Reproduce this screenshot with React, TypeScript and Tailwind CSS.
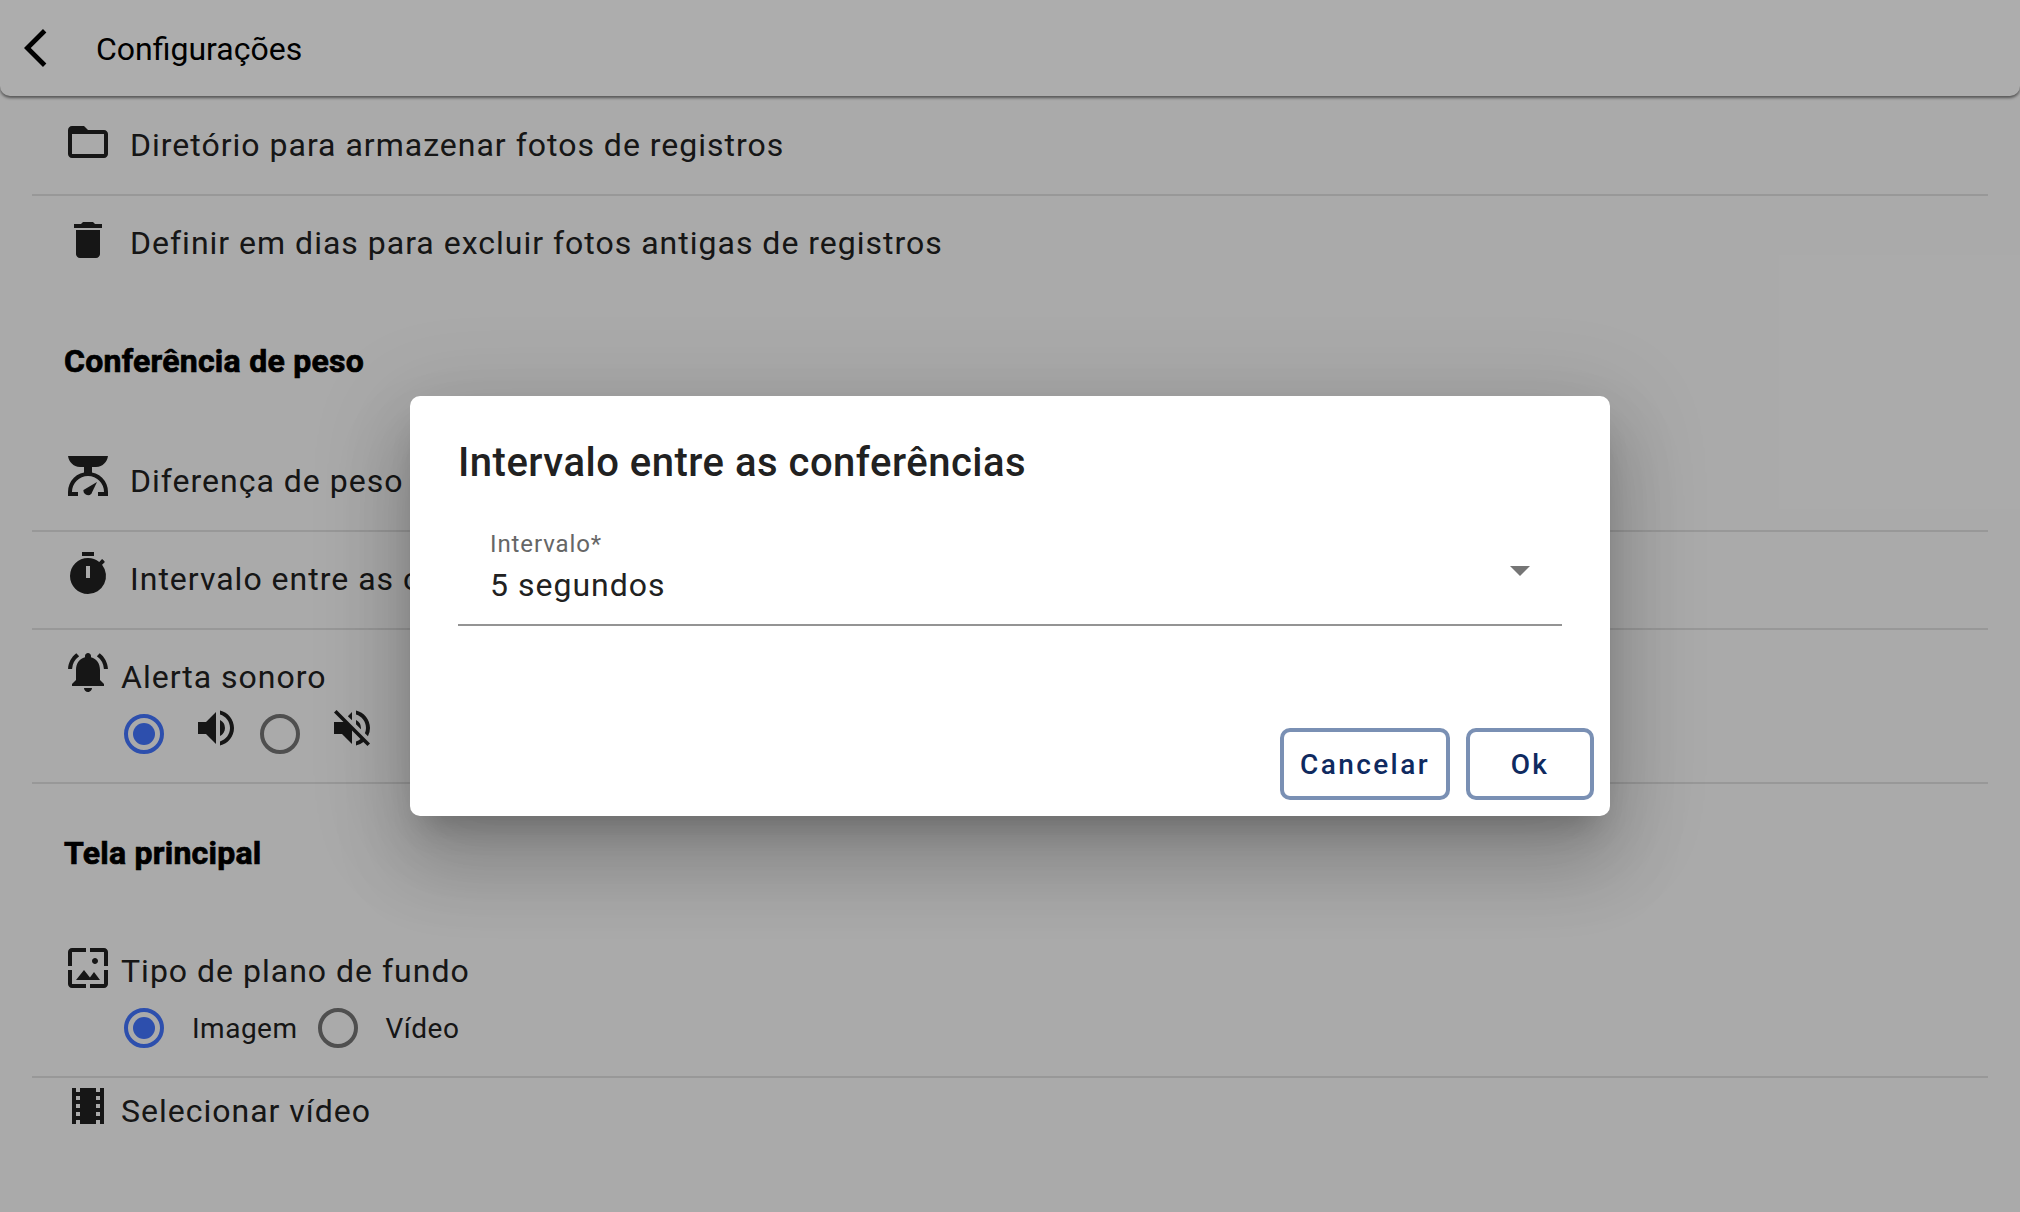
import React from "react";
import {
  MdArrowBackIos,
  MdFolderOpen,
  MdDelete,
  MdTimer,
  MdNotificationsActive,
  MdVolumeUp,
  MdVolumeOff,
  MdWallpaper,
  MdLocalMovies,
} from "react-icons/md";

function ScaleIcon() {
  return (
    <svg viewBox="0 0 40 40" className="h-10 w-10 shrink-0 text-[#212121]" fill="currentColor">
      <path d="M0 0H40C39 6 35 10.500 28 11H12C5 10.500 1 6 0 0Z" />
      <path d="M16 10H24V17H16Z" />
      <path d="M0 40V36A20 20 0 0 1 40 36V40H30V36H36A16 16 0 0 0 4 36H10V40Z" />
      <path d="M29 26 23.500 37.500A4.500 4.500 0 0 1 15.500 34Z" />
    </svg>
  );
}

function Radio({ on }: { on?: boolean }) {
  return (
    <span
      className={
        "flex h-10 w-10 shrink-0 items-center justify-center rounded-full border-4 " +
        (on ? "border-[#4375ff]" : "border-[#757575]")
      }
    >
      {on && <span className="h-[22px] w-[22px] rounded-full bg-[#4375ff]" />}
    </span>
  );
}

const icon = "shrink-0 text-[48px] text-[#212121]";
const label = "text-[32px] leading-[40px] tracking-[1px] text-[#212121] whitespace-nowrap";
const heading =
  "pl-[32px] text-[32px] leading-[40px] font-bold tracking-[0.25px] text-black [-webkit-text-stroke:0.7px_black]";

export default function App() {
  return (
    <div className="relative h-[1212px] w-[2020px] overflow-hidden bg-[#fbfbfb] font-['Roboto',sans-serif]">
      <header className="flex h-[96px] items-center rounded-b-[10px] bg-[#ffffff] pl-[24px] shadow-[0_2px_3px_rgba(0,0,0,0.5)]">
        <MdArrowBackIos className="text-[46px] text-black" />
        <span className="ml-[26px] mt-[2px] text-[32px] text-black">Configurações</span>
      </header>

      <main className="px-[32px]">
        <div className="flex h-[100px] items-start gap-[18px] border-b-2 border-[#e0e0e0] pl-[32px] pt-[22px]">
          <MdFolderOpen className={icon} />
          <span className={label + " mt-[7px]"}>Diretório para armazenar fotos de registros</span>
        </div>
        <div className="flex h-[98px] items-start gap-[18px] pl-[32px] pt-[20px]">
          <MdDelete className={icon} />
          <span className={label + " mt-[7px]"}>Definir em dias para excluir fotos antigas de registros</span>
        </div>

        <h2 className={"mt-[47px] " + heading}>Conferência de peso</h2>

        <div className="mt-[75px] flex h-[76px] items-start gap-[22px] border-b-2 border-[#e0e0e0] pl-[36px]">
          <ScaleIcon />
          <span className={label + " mt-[5px]"}>Diferença de peso</span>
        </div>
        <div className="flex h-[98px] items-start gap-[18px] border-b-2 border-[#e0e0e0] pl-[32px] pt-[18px]">
          <MdTimer className={icon} />
          <span className={label + " mt-[9px]"}>Intervalo entre as conferências</span>
        </div>
        <div className="h-[154px] border-b-2 border-[#e0e0e0] pl-[32px] pt-[18px]">
          <div className="flex items-start gap-[9px]">
            <MdNotificationsActive className={icon} />
            <span className={label + " mt-[9px]"}>Alerta sonoro</span>
          </div>
          <div className="mt-[17px] flex items-start pl-[60px]">
            <Radio on />
            <MdVolumeUp className="ml-[28px] -mt-[10px] shrink-0 text-[48px] text-[#212121]" />
            <span className="ml-[20px]"><Radio /></span>
            <MdVolumeOff className="ml-[28px] -mt-[10px] shrink-0 text-[48px] text-[#212121]" />
          </div>
        </div>

        <h2 className={"mt-[49px] " + heading}>Tela principal</h2>

        <div className="mt-[71px] h-[134px] border-b-2 border-[#e0e0e0] pl-[32px]">
          <div className="flex items-start gap-[9px]">
            <MdWallpaper className={icon} />
            <span className={label + " mt-[7px]"}>Tipo de plano de fundo</span>
          </div>
          <div className="mt-[14px] flex items-center pl-[60px] text-[28px] tracking-[0.5px] text-[#212121]">
            <Radio on />
            <span className="ml-[28px] mt-[2px]">Imagem</span>
            <span className="ml-[20px]"><Radio /></span>
            <span className="ml-[28px] mt-[2px]">Vídeo</span>
          </div>
        </div>
        <div className="flex items-start gap-[9px] pl-[32px] pt-[4px]">
          <MdLocalMovies className={icon} />
          <span className={label + " mt-[9px]"}>Selecionar vídeo</span>
        </div>
      </main>

      <div className="absolute inset-0 flex items-center justify-center bg-black/[0.32]">
        <div className="h-[420px] w-[1200px] rounded-[10px] bg-white px-[48px] pt-[41px] shadow-[0_22px_30px_-14px_rgba(0,0,0,0.2),0_48px_76px_6px_rgba(0,0,0,0.14),0_18px_92px_16px_rgba(0,0,0,0.12)]">
          <h1 className="text-[40px] leading-[52px] font-medium tracking-[0.5px] text-[#212121]">Intervalo entre as conferências</h1>
          <div className="relative mt-[33px] h-[104px] border-b-2 border-[#949494] pl-[32px] pt-[7px]">
            <div className="text-[24px] leading-[30px] tracking-[0.9px] text-[#666666]">Intervalo*</div>
            <div className="mt-[6px] text-[32px] leading-[40px] tracking-[1px] text-[#212121]">5 segundos</div>
            <span className="absolute right-[32px] top-[44px] h-0 w-0 border-x-[10px] border-t-[10px] border-x-transparent border-t-[#757575]" />
          </div>
          <div className="mt-[102px] -mr-[32px] flex justify-end gap-[16px]">
            <button className="h-[72px] w-[170px] rounded-[10px] border-4 border-[#7a90b4] pt-[2px] text-[28px] font-medium tracking-[2.4px] text-[#0f2a5f]">Cancelar</button>
            <button className="h-[72px] w-[128px] rounded-[10px] border-4 border-[#7a90b4] pt-[2px] text-[28px] font-medium tracking-[2.4px] text-[#0f2a5f]">Ok</button>
          </div>
        </div>
      </div>
    </div>
  );
}
